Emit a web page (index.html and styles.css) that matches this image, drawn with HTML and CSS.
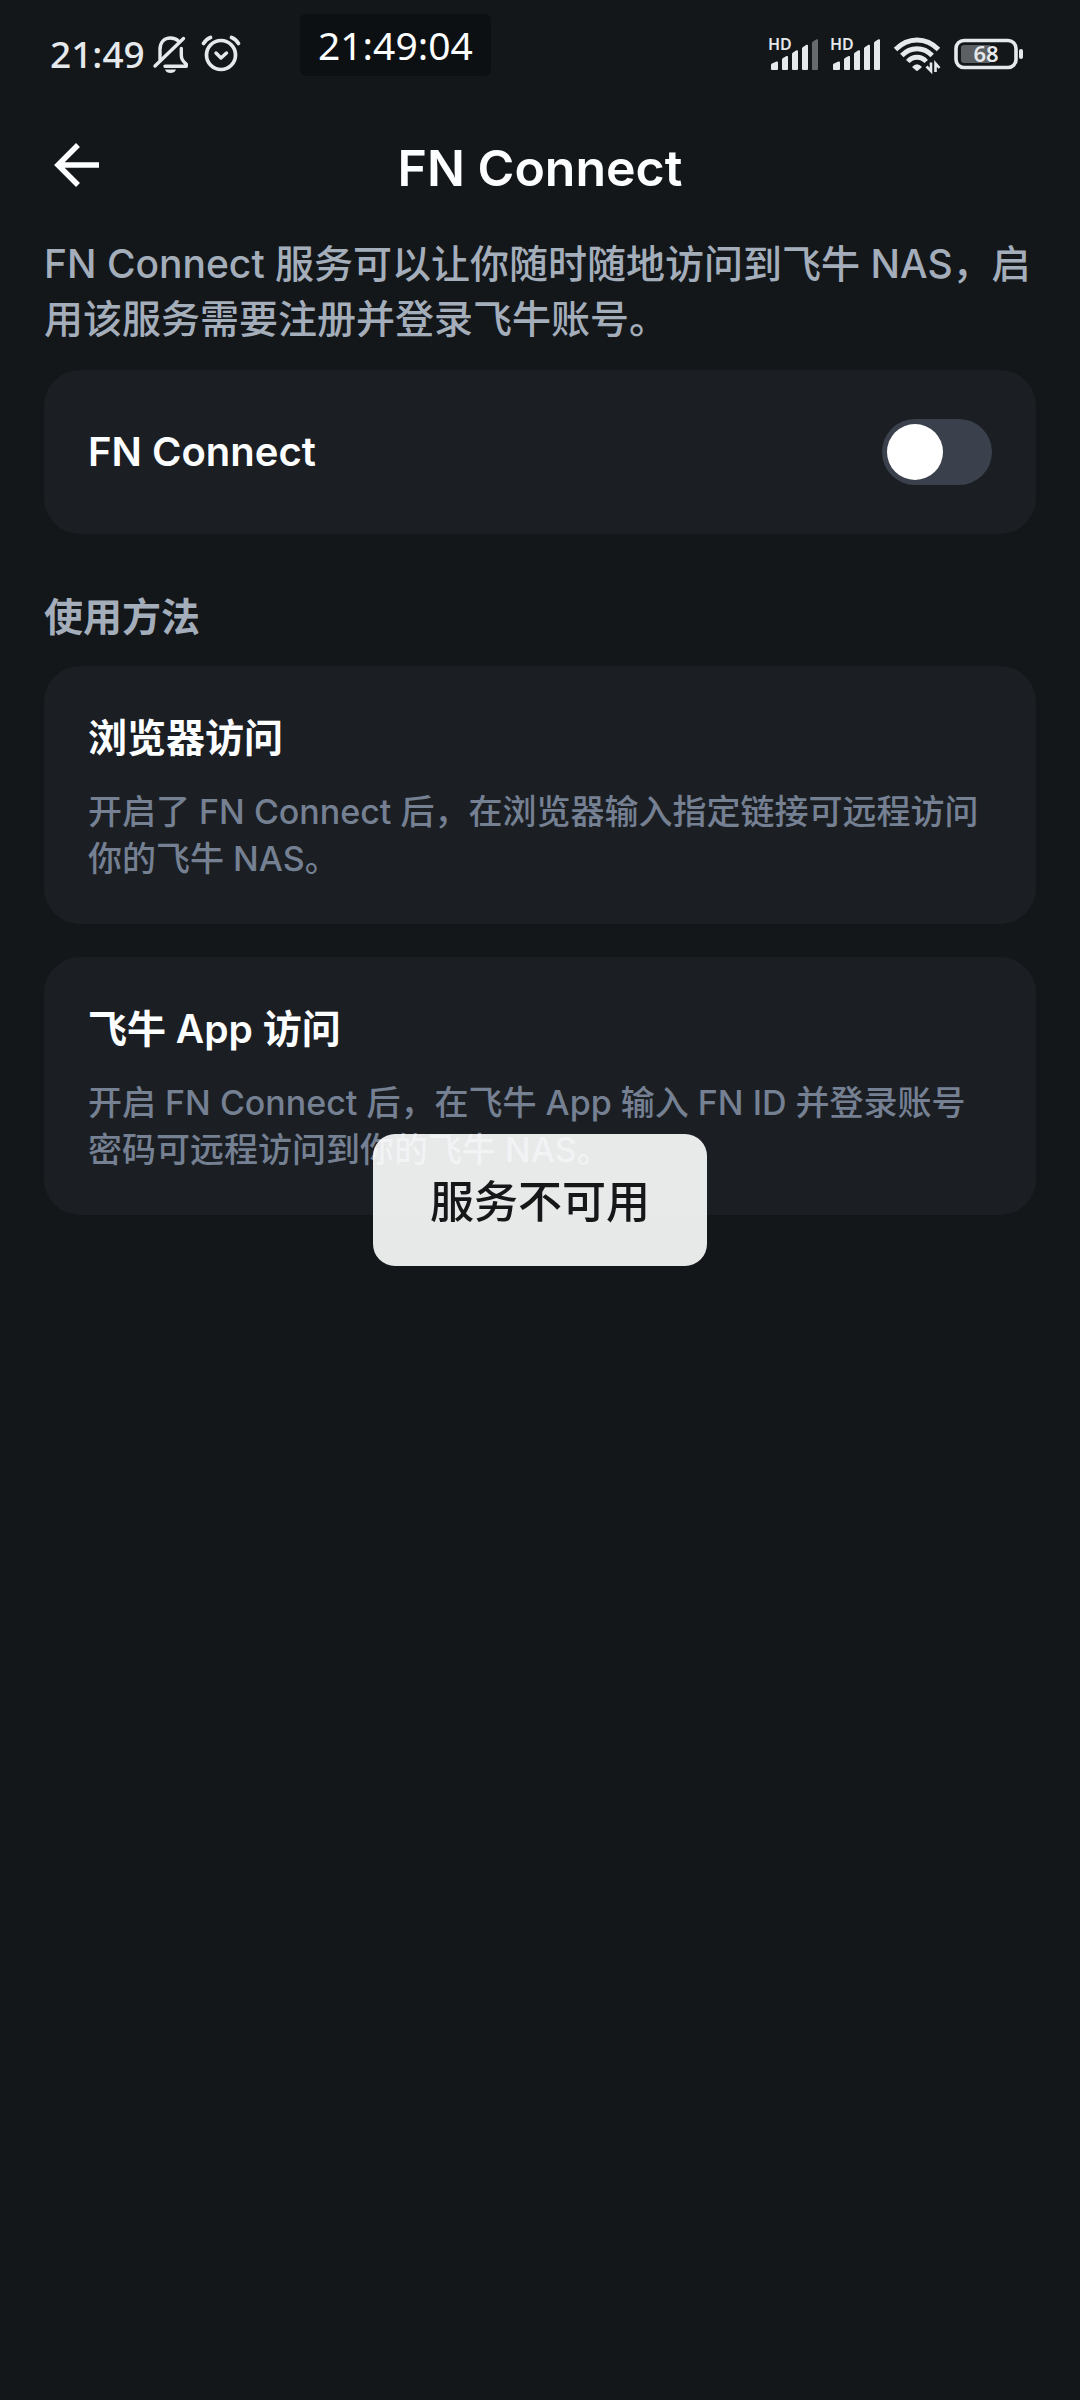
FILE: index.html
```html
<!DOCTYPE html>
<html lang="zh-CN">
<head>
<meta charset="utf-8">
<meta name="viewport" content="width=device-width, initial-scale=1">
<title>FN Connect</title>
<link rel="stylesheet" href="styles.css">
</head>
<body>
<div class="status-bar">
  <div class="status-group status-left">
    <span class="status-time">21:49</span>
    <svg class="icon-bell" width="36" height="40" viewBox="0 0 36 40" aria-hidden="true">
      <path d="M7 25.500V15.500C7 8.500 11 4 17.500 4c3.500 0 6 1 8 3.200M28.300 14.500V21c0 4 1.200 5.500 5 9.300v2H12" fill="none" stroke="currentColor" stroke-width="3.400" stroke-linejoin="round" stroke-linecap="round"/>
      <path d="M2 32 30.500 4.500" fill="none" stroke="currentColor" stroke-width="3.400" stroke-linecap="round"/>
      <path d="M12 35.500h11c-1 2.600-3 3.500-5.500 3.500s-4.500-.9-5.500-3.500z" fill="currentColor"/>
    </svg>
    <svg class="icon-alarm" width="40" height="40" viewBox="0 0 40 40" fill="none" stroke="currentColor" stroke-linecap="round" stroke-linejoin="round" aria-hidden="true">
      <circle cx="20" cy="21" r="14.500" stroke-width="3.700"/>
      <path d="M2.500 9.500C4 7 6.500 4.500 9.500 3.500M37.500 9.500C36 7 33.500 4.500 30.500 3.500" stroke-width="3.700"/>
      <path d="m15 19 5 5 5.500-5" stroke-width="3.400"/>
    </svg>
  </div>
  <div class="status-group status-right">
    <svg width="50" height="40" viewBox="0 0 50 40" fill="currentColor" role="img" aria-label="SIM 1">
      <text class="hd-text" x="-1" y="16">HD</text>
      <path d="M2 31q0-1 1-1.400L7.500 27.500q1.500-.4 1.500 1V35q0 1-1 1H3q-1 0-1-1zM13 25.500q0-1 1-1.500l3.500-2q1.500-.5 1.500 1V35q0 1-1 1h-4q-1 0-1-1zM23 20q0-1 1-1.500l3.500-2.200q1.500-.5 1.500 1V35q0 1-1 1h-4q-1 0-1-1zM33 14.500q0-1 1-1.500l3.500-2.200q1.500-.5 1.500 1V35q0 1-1 1h-4q-1 0-1-1z"/>
      <path d="M43 9q0-1 1-1.500l3.500-2.200q1.500-.5 1.500 1V35q0 1-1 1h-4q-1 0-1-1z" opacity=".4"/>
    </svg>
    <svg width="50" height="40" viewBox="0 0 50 40" fill="currentColor" role="img" aria-label="SIM 2">
      <text class="hd-text" x="-1" y="16">HD</text>
      <path d="M2 31q0-1 1-1.400L7.500 27.500q1.500-.4 1.500 1V35q0 1-1 1H3q-1 0-1-1zM13 25.500q0-1 1-1.500l3.500-2q1.500-.5 1.500 1V35q0 1-1 1h-4q-1 0-1-1zM23 20q0-1 1-1.500l3.500-2.200q1.500-.5 1.500 1V35q0 1-1 1h-4q-1 0-1-1zM33 14.500q0-1 1-1.500l3.500-2.200q1.500-.5 1.500 1V35q0 1-1 1h-4q-1 0-1-1zM43 9q0-1 1-1.500l3.500-2.200q1.500-.5 1.500 1V35q0 1-1 1h-4q-1 0-1-1z"/>
    </svg>
    <svg width="48" height="40" viewBox="0 0 48 40" role="img" aria-label="Wi-Fi">
      <g fill="none" stroke="currentColor" stroke-width="4.800">
        <path d="M2.500 15.500C15 2.800 33 2.800 45.500 15.500"/>
        <path d="M8.800 21.500C17.500 12.500 30.500 12.500 39.200 21.500"/>
        <path d="M14.800 27.500C20 21.800 28 21.800 33.200 27.500"/>
      </g>
      <path d="M19 33q5-5.500 10 0l-4 3.600q-1 .8-2 0z" fill="currentColor"/>
      <path d="M38 28.500v8.500l-4.500-4.500M42.500 38v-8.500l4 4.500" fill="none" stroke="currentColor" stroke-width="2.600"/>
    </svg>
    <svg width="72" height="40" viewBox="0 0 72 40" role="img" aria-label="68%">
      <rect x="3" y="6.500" width="60" height="27" rx="8" fill="none" stroke="currentColor" stroke-width="3.600"/>
      <path d="M11 11h26v18H11q-3 0-3-3V14q0-3 3-3z" fill="currentColor" opacity=".35"/>
      <rect x="66" y="15" width="4" height="10" rx="2" fill="currentColor"/>
      <text class="battery-text" x="33" y="28">68</text>
    </svg>
  </div>
  <time class="floating-clock">21:49:04</time>
</div>

<header class="app-bar">
  <button class="back-button" type="button" aria-label="返回">
    <svg width="48" height="48" viewBox="0 0 48 48" fill="none" stroke="currentColor" stroke-width="5.500" aria-hidden="true">
      <path d="M46 23H5M25 3 5 23l20 20"/>
    </svg>
  </button>
  <h1 class="app-title">FN Connect</h1>
</header>

<main class="content">
  <p class="intro">FN Connect 服务可以让你随时随地访问到飞牛 NAS，启用该服务需要注册并登录飞牛账号。</p>

  <section class="card switch-card">
    <label class="switch-label" for="fn-connect">FN Connect</label>
    <input class="switch" id="fn-connect" type="checkbox" role="switch">
  </section>

  <h2 class="section-title">使用方法</h2>

  <div class="card-list">
    <section class="card guide">
      <h3 class="guide-title">浏览器访问</h3>
      <p class="guide-text">开启了 FN Connect 后，在浏览器输入指定链接可远程访问你的飞牛 NAS。</p>
    </section>
    <section class="card guide">
      <h3 class="guide-title">飞牛 App 访问</h3>
      <p class="guide-text">开启 FN Connect 后，在飞牛 App 输入 FN ID 并登录账号密码可远程访问到你的飞牛 NAS。</p>
    </section>
  </div>
</main>

<div class="toast" role="status">服务不可用</div>
</body>
</html>
```
FILE: styles.css
```css
* {
  box-sizing: border-box;
}

body {
  margin: 0;
  min-height: 100vh;
  background: #13171a;
  color: #fcfeff;
  font-family: Inter, "Noto Sans CJK SC", sans-serif;
}

h1, h2, h3, p {
  margin: 0;
}

svg {
  display: block;
  overflow: visible;
}

/* System status bar */
.status-bar {
  position: relative;
  display: flex;
  justify-content: space-between;
  align-items: center;
  height: 108px;
  padding: 0 55px 0 50px;
  color: #e6e9ec;
  font-family: "Noto Sans", sans-serif;
}

.status-group {
  display: flex;
  align-items: center;
  gap: 12px;
}

.status-time {
  font-size: 37px;
  font-weight: 500;
  line-height: 40px;
}

.icon-bell {
  margin-left: -4px;
}

.hd-text {
  font-size: 16px;
  font-weight: 600;
}

.battery-text {
  fill: currentColor;
  font-size: 22px;
  font-weight: 600;
  text-anchor: middle;
}

.floating-clock {
  position: absolute;
  top: 14px;
  left: 300px;
  padding: 0 18px;
  border-radius: 6px;
  background: #0c1013;
  color: #fcfeff;
  font-size: 39px;
  line-height: 62px;
}

/* App bar */
.app-bar {
  display: grid;
  grid-template-columns: 48px 1fr 48px;
  align-items: center;
  height: 116px;
  padding: 0 53px;
}

.back-button {
  padding: 0;
  border: 0;
  background: none;
  color: inherit;
}

.app-title {
  padding-top: 4px;
  font-size: 50px;
  font-weight: 600;
  line-height: 60px;
  text-align: center;
}

/* Page content */
.content {
  padding: 12px 44px 44px;
}

.intro {
  color: #a4adba;
  font-size: 39px;
  font-weight: 500;
  line-height: 55px;
}

.card {
  border-radius: 36px;
  background: #1b1f23;
}

.switch-card {
  display: flex;
  justify-content: space-between;
  align-items: center;
  margin-top: 24px;
  padding: 49px 44px;
}

.switch-label {
  font-size: 40px;
  font-weight: 600;
  line-height: 56px;
}

.switch {
  appearance: none;
  width: 110px;
  height: 66px;
  margin: 0;
  padding: 5px;
  border-radius: 33px;
  background: #3a414c;
}

.switch::before {
  content: "";
  display: block;
  width: 56px;
  height: 56px;
  border-radius: 50%;
  background: #fff;
}

.switch:checked {
  background: #2f7bff;
}

.switch:checked::before {
  margin-left: auto;
}

.section-title {
  margin: 55px 0 21px;
  color: #a4adba;
  font-size: 39px;
  font-weight: 600;
  line-height: 56px;
}

.card-list {
  display: grid;
  gap: 33px;
}

.guide {
  padding: 44px 44px 42px;
}

.guide-title {
  font-size: 39px;
  font-weight: 600;
  line-height: 56px;
}

.guide-text {
  margin-top: 22px;
  color: #758093;
  font-size: 34px;
  font-weight: 500;
  line-height: 47px;
}

.toast {
  position: fixed;
  top: 50%;
  left: 50%;
  padding: 36px 57px 32px;
  border-radius: 22px;
  background: rgba(255, 255, 255, 0.9);
  color: #161719;
  font-size: 44px;
  font-weight: 500;
  line-height: 64px;
  white-space: nowrap;
  transform: translate(-50%, -50%);
}
```
